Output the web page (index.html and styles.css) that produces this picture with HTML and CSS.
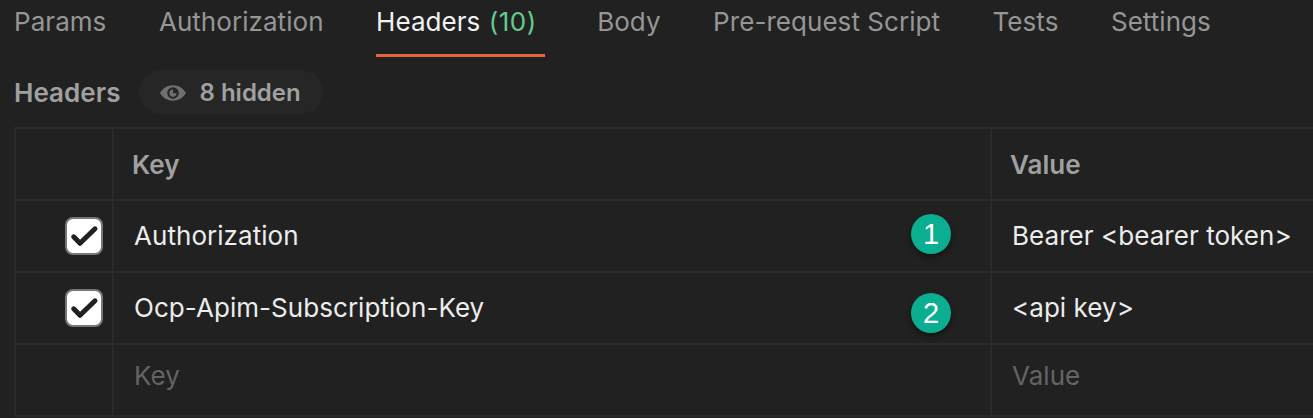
FILE: index.html
```
<!DOCTYPE html>
<html lang="en">
<head>
<meta charset="utf-8">
<title>Request headers</title>
<link rel="stylesheet" href="styles.css">
</head>
<body>
<nav class="tabs">
  <a class="tab">Params</a>
  <a class="tab">Authorization</a>
  <a class="tab active">Headers <span class="count">(10)</span></a>
  <a class="tab">Body</a>
  <a class="tab">Pre-request Script</a>
  <a class="tab">Tests</a>
  <a class="tab">Settings</a>
</nav>
<div class="toolbar">
  <h2 class="title">Headers</h2>
  <button class="pill">
    <svg class="eye" viewBox="0 0 26 16"><path fill="#6f6f6f" fill-rule="evenodd" d="M0 8C3 3 7.500 .3 13 .3S23 3 26 8C23 13 18.500 15.700 13 15.700S3 13 0 8ZM13 2.200a5.800 5.800 0 1 0 0 11.600a5.800 5.800 0 0 0 0-11.600Z"/><path fill="#6f6f6f" d="M13 4.500A3.600 3.600 0 1 0 16.600 8.300H13Z"/></svg>
    <span>8 hidden</span>
  </button>
</div>
<div class="grid">
  <div class="cell"></div>
  <div class="cell head">Key</div>
  <div class="cell head">Value</div>

  <div class="cell check"><span class="box"><svg viewBox="0 0 34 34"><path d="M6.700 17.800 13 24.300 28 9.800"/></svg></span></div>
  <div class="cell"><span>Authorization</span><span class="badge">1</span></div>
  <div class="cell">Bearer &lt;bearer token&gt;</div>

  <div class="cell check"><span class="box"><svg viewBox="0 0 34 34"><path d="M6.700 17.800 13 24.300 28 9.800"/></svg></span></div>
  <div class="cell"><span>Ocp-Apim-Subscription-Key</span><span class="badge second">2</span></div>
  <div class="cell">&lt;api key&gt;</div>

  <div class="cell"></div>
  <div class="cell placeholder">Key</div>
  <div class="cell placeholder">Value</div>
</div>
</body>
</html>
```
FILE: styles.css
```
* { box-sizing: border-box; }
body {
  margin: 0;
  height: 418px;
  overflow: hidden;
  background: #212121;
  color: #ececec;
  font: 400 26px/32px Inter, sans-serif;
  letter-spacing: .05px;
  white-space: nowrap;
}
.tabs {
  display: flex;
  gap: 52.5px;
  height: 57px;
  padding-left: 14px;
  color: #969696;
}
.tab { padding-top: 6px; }
.tab.active {
  color: #f2f2f2;
  border-bottom: 3px solid #e5633a;
  padding-right: 8px;
}
.count { margin-left: 1px; letter-spacing: .5px; color: #63cb8c; }
.toolbar {
  display: flex;
  align-items: center;
  gap: 18px;
  height: 70px;
  padding-left: 14px;
}
.title {
  margin: 2px 0 0;
  font-size: 26px;
  font-weight: 600;
  color: #a0a0a0;
}
.pill {
  display: flex;
  align-items: center;
  gap: 14px;
  height: 44px;
  padding: 1px 22px 0 21px;
  border: 0;
  border-radius: 22px;
  background: #262626;
  color: #a0a0a0;
  font: 600 24px/32px Inter, sans-serif;
}
.eye { width: 26px; height: 16px; }
.grid {
  display: grid;
  grid-template-columns: 98px 878px 340px;
  grid-template-rows: repeat(4, 72px);
  margin-left: 14px;
  width: 1318px;
  border-left: 2px solid #2a2a2a;
  border-top: 2px solid #2a2a2a;
}
.cell {
  display: flex;
  align-items: center;
  justify-content: space-between;
  padding: 0 39px 0 20px;
  border-right: 2px solid #2a2a2a;
  border-bottom: 2px solid #2a2a2a;
}
.head { padding: 1px 18px 0; font-weight: 600; color: #a0a0a0; }
.placeholder { padding-bottom: 8px; color: #646464; }
.check { justify-content: flex-end; padding-right: 9px; }
.box {
  width: 38px;
  height: 38px;
  border: 2px solid #777;
  border-radius: 8px;
  background: #fff;
}
.box svg {
  display: block;
  width: 34px;
  height: 34px;
  fill: none;
  stroke: #212121;
  stroke-width: 5;
  stroke-linecap: round;
  stroke-linejoin: round;
}
.badge {
  width: 40px;
  height: 40px;
  margin-top: -5px;
  border-radius: 50%;
  background: #0bae90;
  color: #fff;
  font: 29px/41px "Liberation Sans", sans-serif;
  text-align: center;
  box-shadow: 0 3px 6px rgba(0, 0, 0, .45);
}
.badge.second { margin-top: 9px; }
```
